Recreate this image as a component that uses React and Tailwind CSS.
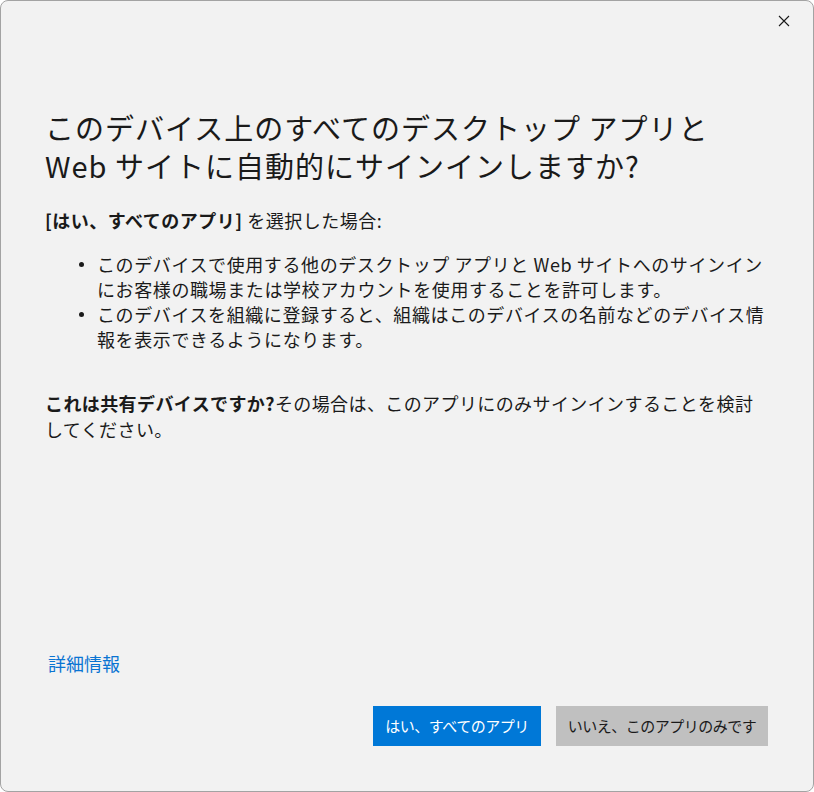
export default function App() {
  const font = { fontFamily: '"Noto Sans CJK JP", "Noto Sans", sans-serif' };
  return (
    <div className="flex h-[792px] w-[814px] bg-white" style={font}>
      <div className="flex h-full w-full flex-col overflow-hidden rounded-[8px] border border-[#a3a3a3] bg-[#f2f2f2] text-[#1a1a1a]">
        {/* close button */}
        <div className="flex h-[40px] shrink-0 justify-end pr-[22px] pt-[13px]">
          <button className="flex h-[14px] w-[14px] items-center justify-center" aria-label="閉じる">
            <svg width="12" height="12" viewBox="0 0 12 12" fill="none">
              <path d="M1 1 L11 11 M11 1 L1 11" stroke="#1a1a1a" strokeWidth="1.1" />
            </svg>
          </button>
        </div>

        <div className="flex flex-1 flex-col pl-[44px] pr-[45px] pt-[67px] pb-[45px]">
          <h1 className="text-[29px] font-normal leading-[38px] tracking-[1px]">
            このデバイス上のすべてのデスクトップ アプリと
            <br />
            Web サイトに自動的にサインインしますか?
          </h1>

          <p className="mt-[24px] text-[18px] leading-[24px] tracking-[0.5px]">
            <span className="font-bold">[はい、すべてのアプリ]</span> を選択した場合:
          </p>

          <div className="mt-[20px] flex flex-col text-[18px] leading-[25px] tracking-[0.6px]">
            <div className="flex">
              <span className="ml-[34px] flex h-[25px] w-[18px] shrink-0 items-center">
                <span className="h-[5px] w-[5px] rounded-full bg-[#1a1a1a]" />
              </span>
              <span>
                このデバイスで使用する他のデスクトップ アプリと Web サイトへのサインイン
                <br />
                にお客様の職場または学校アカウントを使用することを許可します。
              </span>
            </div>
            <div className="flex">
              <span className="ml-[34px] flex h-[25px] w-[18px] shrink-0 items-center">
                <span className="h-[5px] w-[5px] rounded-full bg-[#1a1a1a]" />
              </span>
              <span>
                このデバイスを組織に登録すると、組織はこのデバイスの名前などのデバイス情
                <br />
                報を表示できるようになります。
              </span>
            </div>
          </div>

          <p className="mt-[38px] text-[18px] leading-[26px] tracking-[0.4px]">
            <span className="font-bold">これは共有デバイスですか?</span>
            その場合は、このアプリにのみサインインすることを検討
            <br />
            してください。
          </p>

          <div className="flex-1" />

          <a className="pl-[3px] text-[18px] leading-[24px] text-[#0a74d2]">詳細情報</a>

          <div className="mt-[31px] flex justify-end gap-[15px]">
            <button className="flex h-[40px] w-[168px] items-center justify-center bg-[#0078d7] text-[15px] tracking-[-0.5px] text-white">
              はい、すべてのアプリ
            </button>
            <button className="flex h-[40px] w-[212px] items-center justify-center bg-[#c0c0c0] text-[15px] tracking-[-0.5px] text-[#1a1a1a]">
              いいえ、このアプリのみです
            </button>
          </div>
        </div>
      </div>
    </div>
  );
}
